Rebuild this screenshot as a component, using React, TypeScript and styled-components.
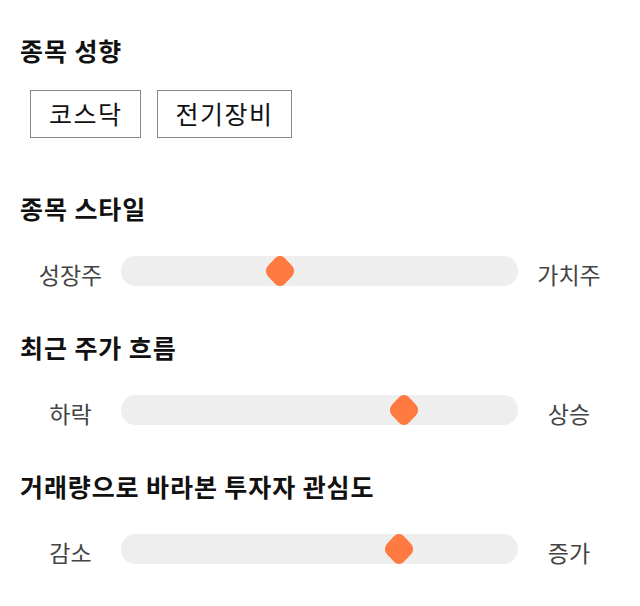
import React from 'react';
import styled, { createGlobalStyle } from 'styled-components';

const GlobalStyle = createGlobalStyle`
  body {
    margin: 0;
    background: #fff;
    font-family: 'Noto Sans CJK KR', 'Noto Sans', sans-serif;
  }
`;

const Page = styled.div`
  width: 600px;
  padding: 34px 20px 20px;
`;

const Section = styled.section`
  & + & {
    margin-top: 40px;
  }
  &:nth-of-type(2) {
    margin-top: 54px;
  }
`;

const Heading = styled.h2`
  margin: 0;
  height: 32px;
  line-height: 32px;
  font-size: 25px;
  font-weight: 700;
  color: #111;
  letter-spacing: 0.9px;
`;

const ChipList = styled.div`
  display: flex;
  gap: 16px;
  padding-left: 10px;
  margin-top: 24px;
`;

const Chip = styled.span`
  display: flex;
  align-items: center;
  justify-content: center;
  box-sizing: border-box;
  height: 48px;
  padding: 0 17px 2px 18px;
  border: 1px solid #888;
  font-size: 25px;
  letter-spacing: 1.5px;
  color: #111;
`;

const SliderRow = styled.div`
  display: grid;
  grid-template-columns: 101px 397px 102px;
  align-items: center;
  height: 40px;
  margin-top: 27px;
`;

const Label = styled.span`
  text-align: center;
  font-size: 23px;
  color: #444;
  padding-top: 5px;
`;

const Track = styled.div`
  position: relative;
  height: 30px;
  border-radius: 14px / 15px;
  background: #eeeeee;
`;

const Thumb = styled.span`
  position: absolute;
  top: 50%;
  width: 24px;
  height: 24px;
  border-radius: 7px;
  background: #ff7a40;
  transform: translate(-50%, -50%) scaleY(1.07) rotate(45deg);
`;

type SliderProps = { left: string; right: string; value: number };

const Slider = ({ left, right, value }: SliderProps) => (
  <SliderRow>
    <Label>{left}</Label>
    <Track>
      <Thumb style={{ left: `${value}%` }} />
    </Track>
    <Label>{right}</Label>
  </SliderRow>
);

const sliders = [
  { title: '종목 스타일', left: '성장주', right: '가치주', value: 40 },
  { title: '최근 주가 흐름', left: '하락', right: '상승', value: 71.3 },
  { title: '거래량으로 바라본 투자자 관심도', left: '감소', right: '증가', value: 70 },
];

export default function App() {
  return (
    <Page>
      <GlobalStyle />
      <Section>
        <Heading>종목 성향</Heading>
        <ChipList>
          <Chip>코스닥</Chip>
          <Chip>전기장비</Chip>
        </ChipList>
      </Section>
      {sliders.map((s) => (
        <Section key={s.title}>
          <Heading>{s.title}</Heading>
          <Slider left={s.left} right={s.right} value={s.value} />
        </Section>
      ))}
    </Page>
  );
}
